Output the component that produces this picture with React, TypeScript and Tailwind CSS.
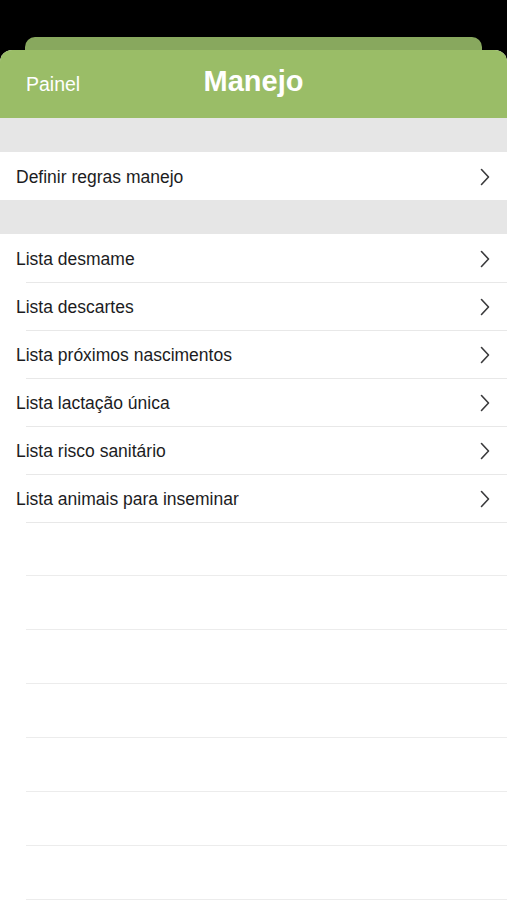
import React from "react";

const items = [
  "Lista desmame",
  "Lista descartes",
  "Lista próximos nascimentos",
  "Lista lactação única",
  "Lista risco sanitário",
  "Lista animais para inseminar",
];

function Chevron() {
  return (
    <svg width="12" height="18" viewBox="0 0 12 18" fill="none" className="mr-[16px] mt-[1px]">
      <path d="M2.5 1.5 L9.5 9 L2.5 16.5" stroke="#3a3a3c" strokeWidth="1.6" strokeLinecap="round" strokeLinejoin="round" />
    </svg>
  );
}

export default function App() {
  return (
    <div className="min-h-[900px] h-[900px] bg-black flex flex-col overflow-hidden" style={{ fontFamily: '"Liberation Sans", Arial, sans-serif' }}>
      <div className="h-[37px]" />
      <div className="ml-[25px] w-[457px] h-[13px] bg-[#88a85e] rounded-t-[10px]" />
      <div className="flex-1 flex flex-col bg-white rounded-t-[12px] overflow-hidden">
        <div className="h-[68px] bg-[#9abd67] grid grid-cols-[1fr_auto_1fr] items-center">
          <span className="pl-[26px] pt-[2px] text-[19.5px] text-white">Painel</span>
          <span className="text-[29px] font-bold text-white pb-[4px]">Manejo</span>
          <span />
        </div>
        <div className="h-[34px] bg-[#e6e6e6]" />
        <div className="h-[48px] flex items-center justify-between pl-[16px]">
          <span className="text-[17.5px] text-[#1c1c1e] pt-[2px]">Definir regras manejo</span>
          <Chevron />
        </div>
        <div className="h-[34px] bg-[#e6e6e6]" />
        <div className="flex flex-col">
          {items.map((it) => (
            <div key={it} className="h-[48px] flex items-center justify-between pl-[16px] relative">
              <span className="text-[17.5px] text-[#1c1c1e] pt-[2px]">{it}</span>
              <Chevron />
              <div className="absolute left-[26px] right-0 bottom-[-1px] h-px bg-[#e8e8e8]" />
            </div>
          ))}
          {Array.from({ length: 7 }).map((_, i) => (
            <div key={i} className="h-[54px] ml-[26px] border-b border-[#ececec]" />
          ))}
        </div>
      </div>
    </div>
  );
}
